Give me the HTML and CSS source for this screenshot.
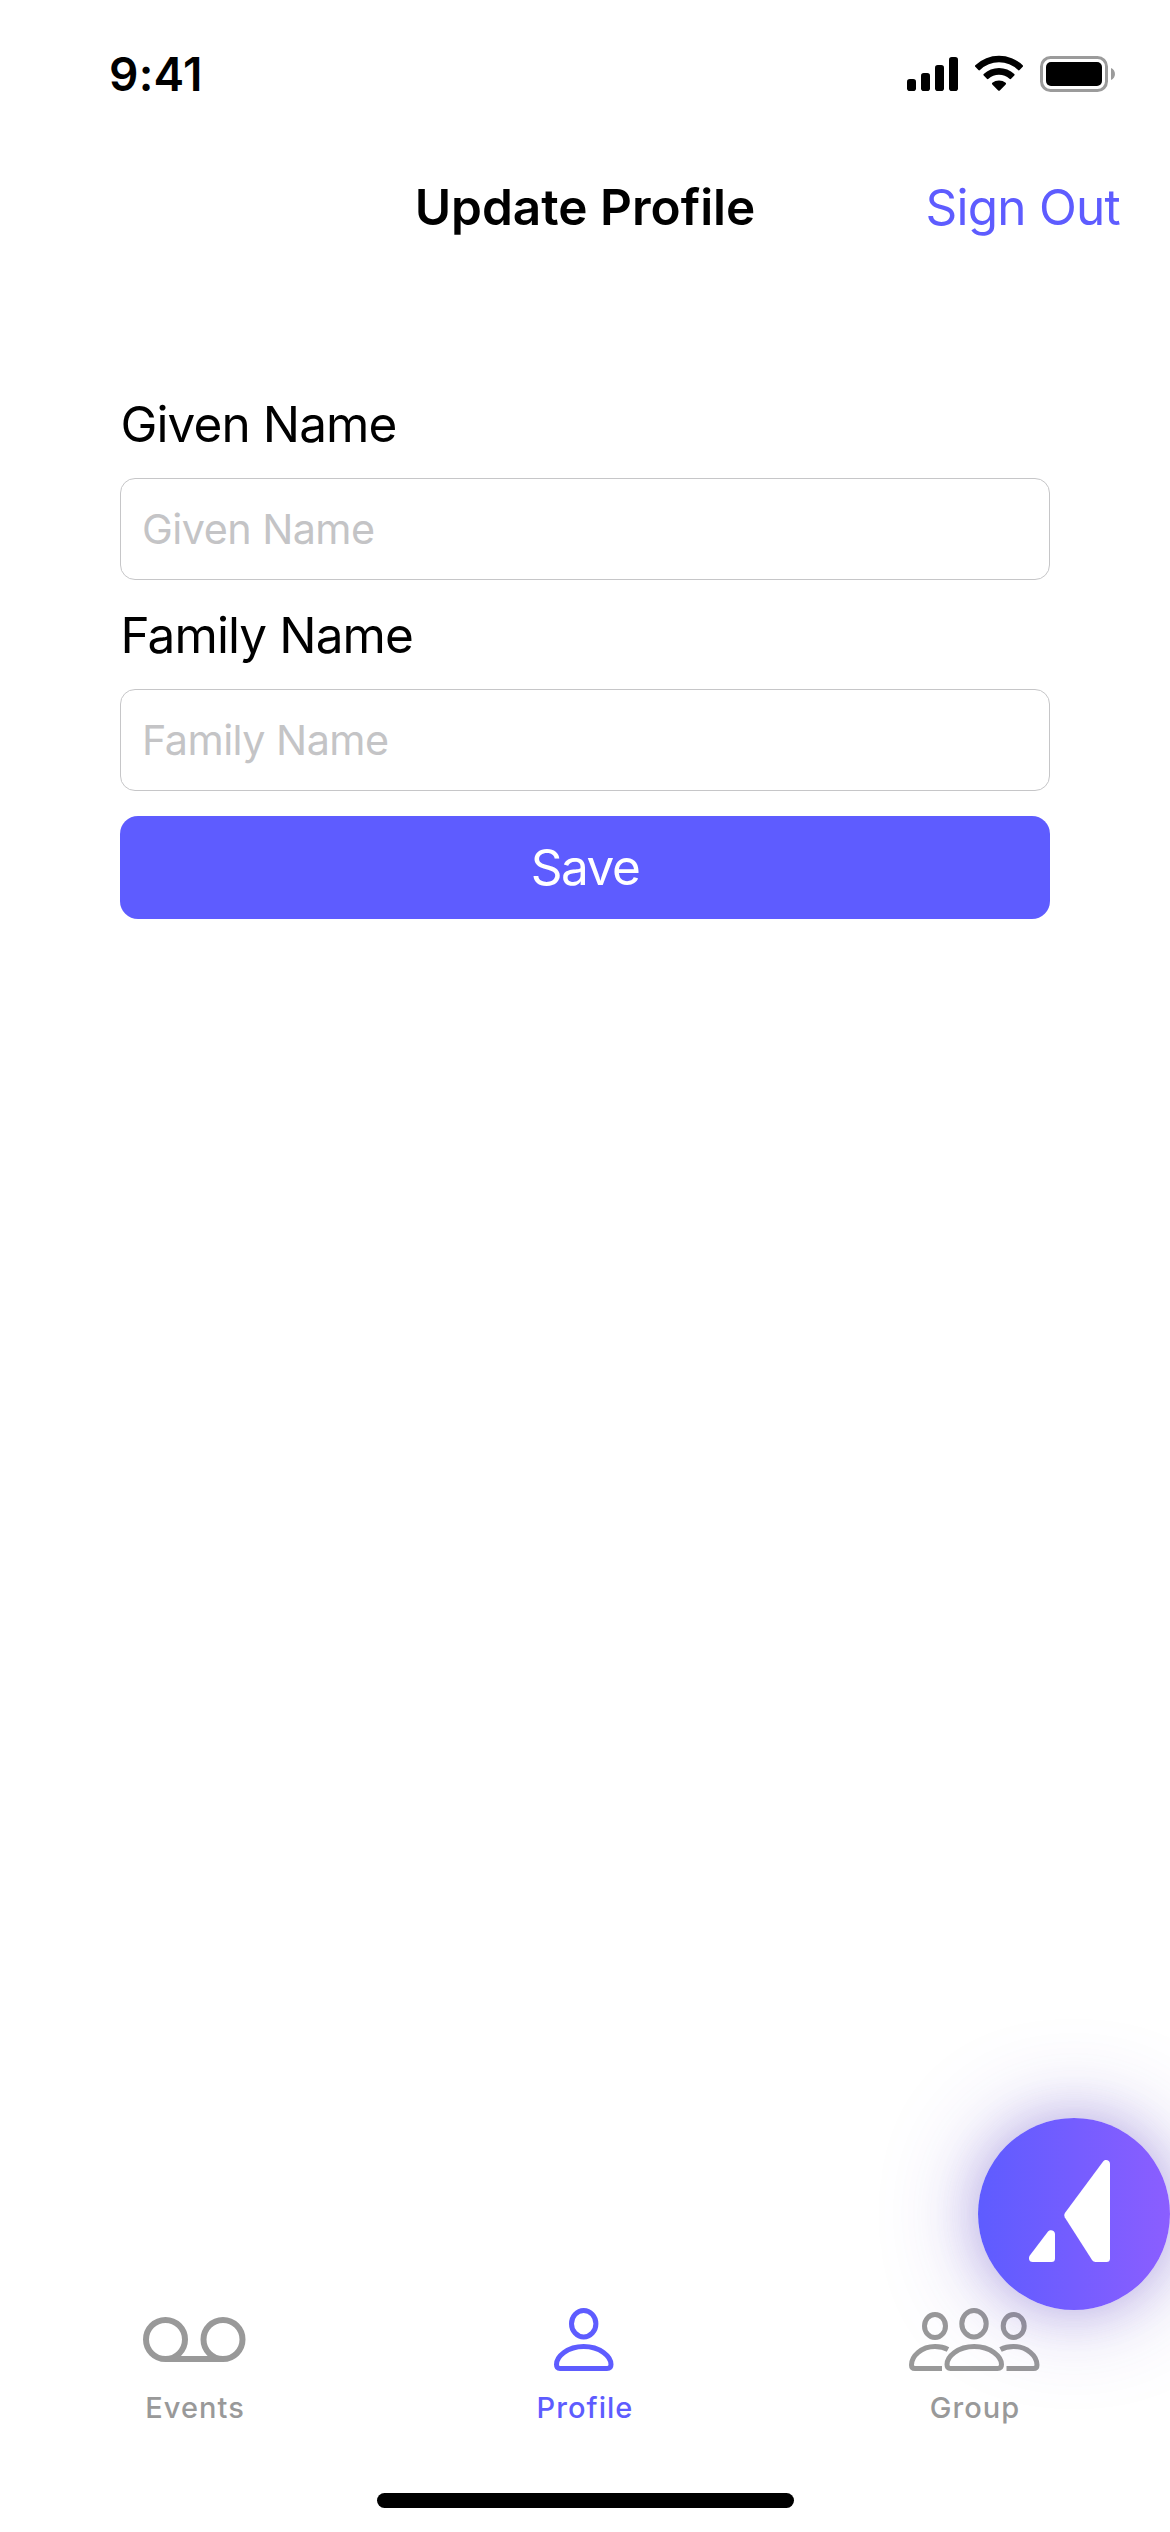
FILE: index.html
```html
<!DOCTYPE html>
<html lang="en">
<head>
<meta charset="utf-8">
<title>Update Profile</title>
<link rel="stylesheet" href="styles.css">
</head>
<body>
<div class="screen">
  <div class="status">
    <span class="time">9:41</span>
    <svg class="status-icons" width="212" height="42" viewBox="905 53 212 42">
      <rect x="907" y="79" width="9" height="12" rx="2.8"/>
      <rect x="921" y="73" width="9" height="18" rx="2.8"/>
      <rect x="935" y="65" width="9" height="26" rx="2.8"/>
      <rect x="949" y="57" width="9" height="34" rx="2.8"/>
      <path d="M975.3 65.2a34.5 34.5 0 0 1 47.400 0q.8.8 0 1.600l-3.100 3.200q-.8.8-1.600 0a27.400 27.400 0 0 0-38 0q-.8.8-1.600 0l-3.100-3.200q-.8-.8 0-1.600z"/>
      <path d="M983.700 74a22.200 22.200 0 0 1 30.600 0q.8.8 0 1.600l-3.200 3.200q-.8.7-1.600 0a15.400 15.400 0 0 0-21 0q-.8.7-1.600 0l-3.200-3.200q-.8-.8 0-1.600z"/>
      <path d="M992.300 82.800a10.500 10.500 0 0 1 13.400 0q.8.8 0 1.600l-5.900 6q-.8.800-1.600 0l-5.900-6q-.8-.8 0-1.600z"/>
      <rect x="1041.500" y="57.500" width="65" height="33" rx="9" fill="none" stroke="#9b9b9b" stroke-width="3"/>
      <rect x="1046" y="62" width="56" height="24" rx="5"/>
      <path d="M1111 68c5.300 2.300 5.300 9.700 0 12z" fill="#9b9b9b"/>
    </svg>
  </div>
  <header class="nav">
    <h1 class="title">Update Profile</h1>
    <a class="signout">Sign Out</a>
  </header>
  <form class="form">
    <label class="label" for="given">Given Name</label>
    <input class="field" id="given" type="text" placeholder="Given Name">
    <label class="label" for="family">Family Name</label>
    <input class="field" id="family" type="text" placeholder="Family Name">
    <button class="save" type="button">Save</button>
  </form>
  <nav class="tabs">
    <div class="tab">
      <svg width="132" height="72" viewBox="129 2304 132 72" class="line">
        <circle cx="165.500" cy="2339.500" r="19.500" stroke-width="6"/>
        <circle cx="223" cy="2339.500" r="19.500" stroke-width="6"/>
        <path d="M165.500 2359h57.500" stroke-width="6"/>
      </svg>
      <span>Events</span>
    </div>
    <div class="tab active">
      <svg width="132" height="72" viewBox="519 2304 132 72" class="line">
        <ellipse cx="583.700" cy="2323.700" rx="12.200" ry="13.200"/>
        <path d="M560 2368.500h47q4 0 4-4c0-8-11-18-27.300-18s-27.200 10-27.200 18q0 4 3.500 4z"/>
      </svg>
      <span>Profile</span>
    </div>
    <div class="tab">
      <svg width="132" height="72" viewBox="909 2304 132 72" class="line">
        <ellipse cx="935" cy="2326" rx="10.500" ry="11.500"/>
        <ellipse cx="974" cy="2323.700" rx="12.200" ry="13.200"/>
        <ellipse cx="1013.700" cy="2326" rx="10.500" ry="11.500"/>
        <path d="M950.500 2368.500h47q4 0 4-4c0-8-11-18-27.300-18s-27.200 10-27.200 18q0 4 3.500 4z"/>
        <path d="M942 2368.500h-27q-3.500 0-3.500-3.500c0-9 10-18.500 23.500-18.500q7.500 0 13 3"/>
        <path d="M1006.500 2368.500h27q3.500 0 3.500-3.500c0-9-10-18.500-23.500-18.500q-7.500 0-13 3"/>
      </svg>
      <span>Group</span>
    </div>
  </nav>
  <div class="home"></div>
  <div class="fab">
    <svg width="192" height="192" viewBox="978 2118 192 192" fill="#fff">
      <path d="M1103.300 2161.200c2.200-2.500 6.700-1 6.700 2.600V2258.500q0 3.500-3.500 3.500h-11q-2.200 0-3.300-1.700l-27.500-43q-1.200-2.100.2-4.200z"/>
      <path d="M1048 2231.500c2.200-2.400 7-1.200 7 2.500V2258.500q0 3.500-3.500 3.500h-19c-3.300 0-4.600-4-2.500-6.800z"/>
    </svg>
  </div>
</div>
</body>
</html>
```
FILE: styles.css
```css
* { box-sizing: border-box; }
body { margin: 0; background: #fff; color: #000; font-family: Inter, "Liberation Sans", sans-serif; }
svg { display: block; }
.screen { position: relative; width: 1170px; height: 2532px; display: flex; flex-direction: column; overflow: hidden; }
.status { height: 141px; flex: none; display: flex; align-items: flex-start; justify-content: space-between; padding: 53px 53px 0 109px; }
.time { font-size: 46px; font-weight: 600; line-height: 43px; letter-spacing: .25px; }
.nav { height: 132px; flex: none; display: grid; grid-template-columns: 1fr auto 1fr; align-items: center; padding: 0 50px; }
.title { grid-column: 2; margin: 0; font-size: 49.5px; font-weight: 600; }
.signout { justify-self: end; color: #5e5cff; font-size: 49.5px; letter-spacing: -.77px; }
.form { display: flex; flex-direction: column; padding: 121px 120px 0; }
.label { height: 84px; padding-left: .5px; font-size: 49.5px; line-height: 60px; letter-spacing: -.91px; }
.field { width: 100%; height: 102px; margin: 0 0 25px; padding: 0 21px; border: 1px solid #c6c6c8; border-radius: 15px; background: #fff; font: 41.3px/50px Inter, "Liberation Sans", sans-serif; letter-spacing: -.53px; }
.field::placeholder { color: #c4c4c6; opacity: 1; }
.save { height: 103px; padding: 0; border: 0; border-radius: 18px; background: #5e5cff; color: #fff; font: 49.5px/103px Inter, "Liberation Sans", sans-serif; letter-spacing: -1.5px; }
.tabs { margin-top: auto; height: 189px; flex: none; display: grid; grid-template-columns: repeat(3, 1fr); }
.tab { display: flex; flex-direction: column; align-items: center; gap: 14px; font-size: 29px; font-weight: 500; letter-spacing: 1.05px; color: #999; }
.tab.active { color: #5e5cff; }
.line { fill: none; stroke: currentColor; stroke-width: 5; }
.home { align-self: center; flex: none; width: 417px; height: 15px; border-radius: 8px; background: #000; margin-bottom: 24px; }
.fab { position: absolute; right: 0; top: 2118px; width: 192px; height: 192px; border-radius: 50%; background: linear-gradient(90deg, #5e5cff, #8b5eff); box-shadow: 0 0 96px rgba(75, 45, 190, .35), 0 0 45px rgba(75, 45, 190, .2); }
```
